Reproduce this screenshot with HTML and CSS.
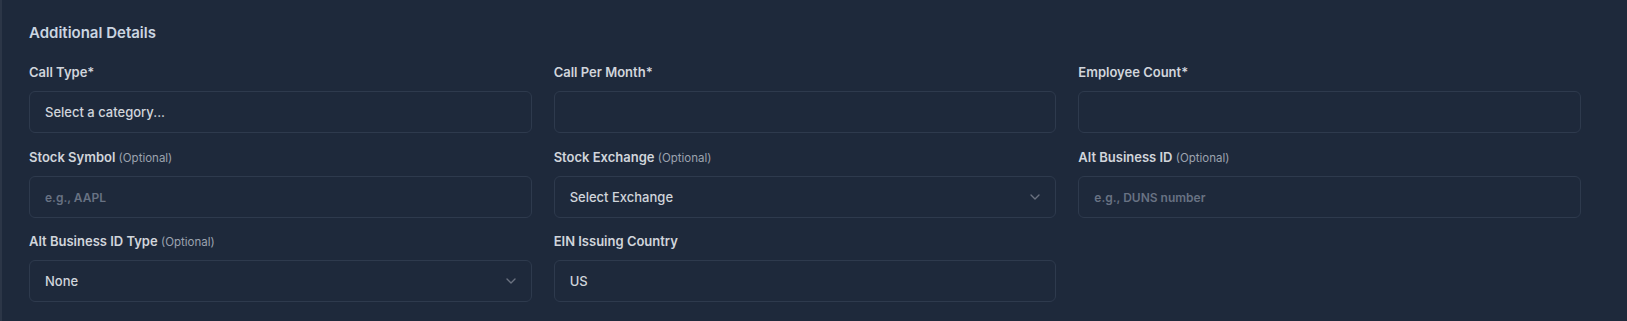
FILE: index.html
```html
<!DOCTYPE html>
<html lang="en">
<head>
    <meta charset="UTF-8">
    <meta name="viewport" content="width=device-width, initial-scale=1.0">
    <title>Additional Details</title>
    <link rel="stylesheet" href="styles.css">
</head>
<body>
    <section class="details-panel">
        <h2 class="details-title">Additional Details</h2>

        <div class="field-grid">
            <div class="field">
                <label class="field-label">Call Type*</label>
                <button type="button" class="field-control">Select a category...</button>
            </div>

            <div class="field">
                <label class="field-label" for="call-per-month">Call Per Month*</label>
                <input type="text" id="call-per-month" class="field-control">
            </div>

            <div class="field">
                <label class="field-label" for="employee-count">Employee Count*</label>
                <input type="text" id="employee-count" class="field-control">
            </div>

            <div class="field">
                <label class="field-label" for="stock-symbol">Stock Symbol <span class="optional">(Optional)</span></label>
                <input type="text" id="stock-symbol" class="field-control" placeholder="e.g., AAPL">
            </div>

            <div class="field">
                <label class="field-label">Stock Exchange <span class="optional">(Optional)</span></label>
                <button type="button" class="field-control select-control">
                    <span>Select Exchange</span>
                    <svg class="chevron" viewBox="0 0 24 24" width="16" height="16" fill="none" stroke="currentColor" stroke-width="2" stroke-linecap="round" stroke-linejoin="round"><path d="m6 9 6 6 6-6"/></svg>
                </button>
            </div>

            <div class="field">
                <label class="field-label" for="alt-business-id">Alt Business ID <span class="optional">(Optional)</span></label>
                <input type="text" id="alt-business-id" class="field-control" placeholder="e.g., DUNS number">
            </div>

            <div class="field">
                <label class="field-label">Alt Business ID Type <span class="optional">(Optional)</span></label>
                <button type="button" class="field-control select-control">
                    <span>None</span>
                    <svg class="chevron" viewBox="0 0 24 24" width="16" height="16" fill="none" stroke="currentColor" stroke-width="2" stroke-linecap="round" stroke-linejoin="round"><path d="m6 9 6 6 6-6"/></svg>
                </button>
            </div>

            <div class="field">
                <label class="field-label" for="ein-country">EIN Issuing Country</label>
                <input type="text" id="ein-country" class="field-control" value="US">
            </div>
        </div>
    </section>
</body>
</html>
```

FILE: styles.css
```css
body {
    margin: 0;
    background-color: #1e293b;
    font-family: Inter, "Noto Sans", sans-serif;
}
.details-panel {
    height: 321px;
    box-sizing: border-box;
    border-left: 2px solid #2c3647;
    padding: 21px 46px 0 27px;
}
.details-title {
    margin: 0 0 16px;
    font-size: 15px;
    line-height: 24px;
    font-weight: 600;
    color: #cbd5e1;
}
.field-grid {
    display: grid;
    grid-template-columns: repeat(3, 1fr);
    column-gap: 22px;
    row-gap: 12.5px;
}
.field {
    display: flex;
    flex-direction: column;
    gap: 7px;
}
.field-label {
    font-size: 13px;
    line-height: 23px;
    font-weight: 600;
    color: #d1d5db;
}
.optional {
    font-size: 11.5px;
    line-height: 1;
    font-weight: 400;
    color: #9ca3af;
}
.field-control {
    display: flex;
    align-items: center;
    height: 42px;
    box-sizing: border-box;
    width: 100%;
    margin: 0;
    padding: 0 12px 0 15px;
    background-color: #1e293b;
    border: 1px solid #2e3a4d;
    border-radius: 6px;
    font-family: inherit;
    font-size: 13px;
    font-weight: 500;
    color: #d1d5db;
    text-align: left;
    outline: none;
}
.field-control::placeholder {
    font-size: 12px;
    font-weight: 600;
    color: #687283;
}
.select-control {
    justify-content: space-between;
}
.chevron {
    color: #6b7280;
    flex-shrink: 0;
}
```
